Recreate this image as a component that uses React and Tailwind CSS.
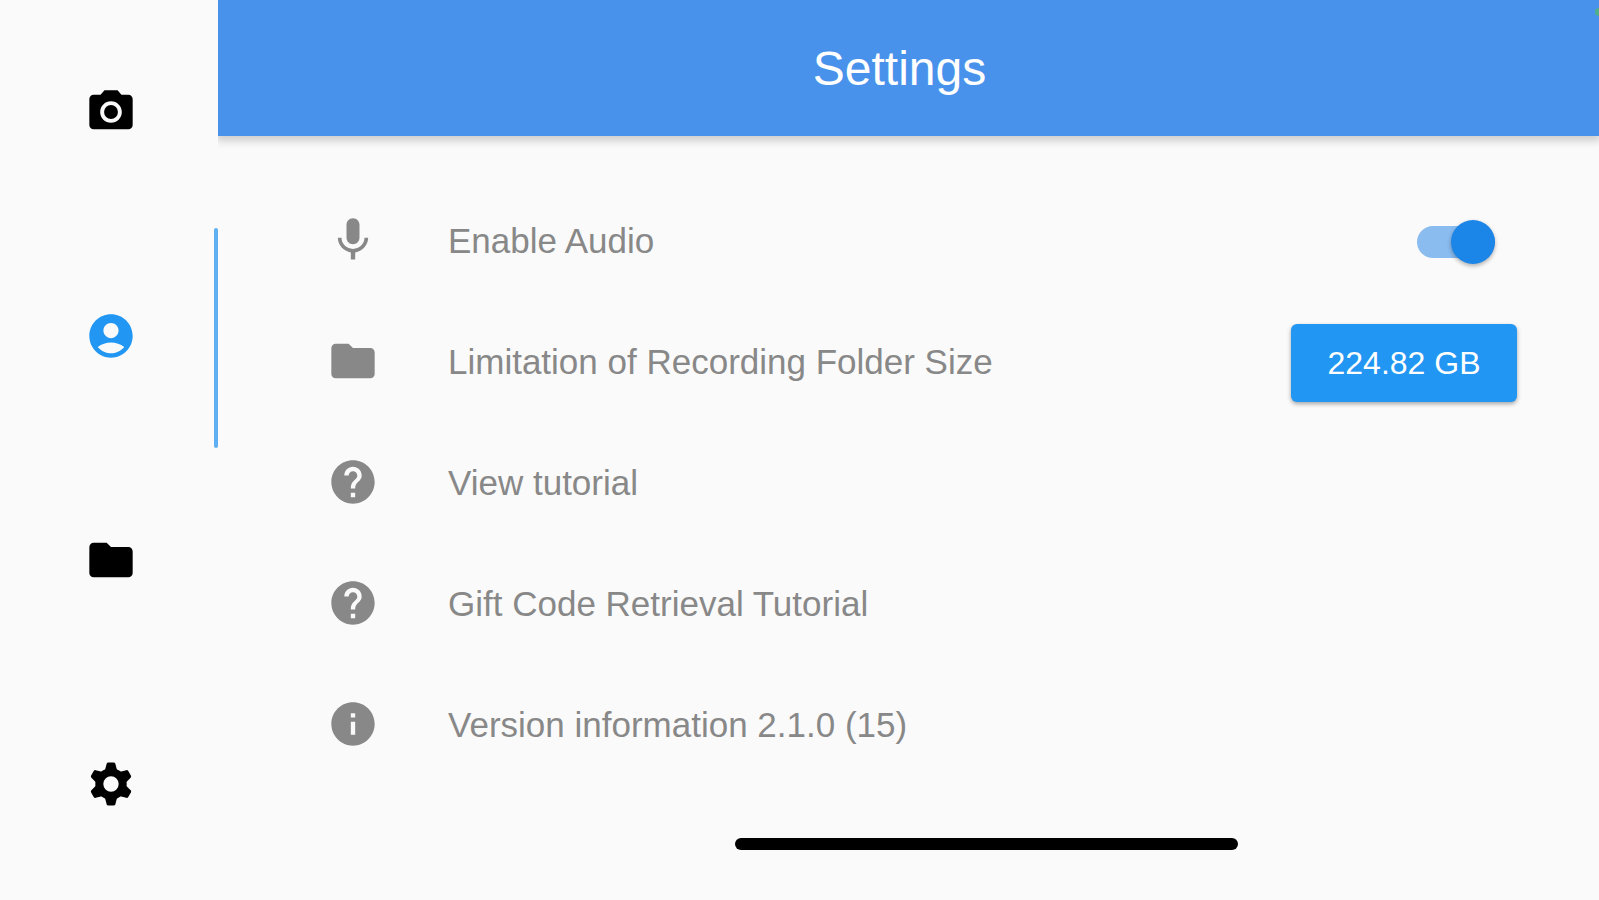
import { useState } from 'react'
import {
  MdAccountCircle,
  MdCameraAlt,
  MdFolder,
  MdHelp,
  MdInfo
} from 'react-icons/md'

function MicIcon({ size, className }) {
  return (
    <svg width={size} height={size} viewBox="0 0 24 24" fill="currentColor" className={className}>
      <path d="M12 14c1.66 0 2.99-1.34 2.99-3L15 5c0-1.66-1.34-3-3-3S9 3.34 9 5v6c0 1.66 1.34 3 3 3zm5.3-3c0 3-2.54 5.1-5.3 5.1S6.7 14 6.7 11H5c0 3.41 2.72 6.23 6 6.72V21h2v-3.28c3.28-.48 6-3.3 6-6.72h-1.7z" />
    </svg>
  )
}

function GearIcon({ size }) {
  return (
    <svg width={size} height={size} viewBox="-12 -12 24 24" fill="currentColor">
      <circle r="5.4" fill="none" stroke="currentColor" strokeWidth="3.7" />
      {[0, 60, 120, 180, 240, 300].map((angle) => (
        <path
          key={angle}
          transform={`rotate(${angle})`}
          d="M-2.9-6l.9-3.3q.2-.6.8-.6h2.4q.6 0 .8.6L2.9-6z"
        />
      ))}
    </svg>
  )
}

const tabs = [
  { id: 'camera', label: 'Camera', icon: MdCameraAlt },
  { id: 'account', label: 'Account', icon: MdAccountCircle },
  { id: 'files', label: 'Files', icon: MdFolder },
  { id: 'settings', label: 'Settings', icon: GearIcon }
]

function NavRail({ active, onChange }) {
  return (
    <nav className="flex w-[218px] shrink-0 flex-col">
      {tabs.map((tab) => (
        <button
          key={tab.id}
          type="button"
          aria-label={tab.label}
          onClick={() => onChange(tab.id)}
          className={`relative flex h-56 items-center justify-center pl-1 ${
            active === tab.id ? 'text-[#2196f3]' : 'text-black'
          }`}
        >
          <tab.icon size={52} />
          {active === tab.id && (
            <span className="absolute top-1 right-0 bottom-0 w-1 rounded-full bg-[#5fb0f3]" />
          )}
        </button>
      ))}
    </nav>
  )
}

function Row({ icon: Icon, children }) {
  return (
    <li className="flex h-[121px] items-center gap-[69px]">
      <Icon size={52} className="shrink-0" />
      <div className="flex flex-1 items-center justify-between pt-1">{children}</div>
    </li>
  )
}

function AudioSwitch({ checked, onChange }) {
  return (
    <span className="relative mr-[22px] flex h-11 w-[78px] items-center">
      <input
        id="enable-audio"
        type="checkbox"
        role="switch"
        checked={checked}
        onChange={(e) => onChange(e.target.checked)}
        className={`h-8 w-full cursor-pointer appearance-none rounded-full ${
          checked ? 'bg-[#8abcf0]' : 'bg-gray-300'
        }`}
      />
      <span
        className={`pointer-events-none absolute top-0 h-11 w-11 rounded-full shadow-[0_2px_4px_rgba(0,0,0,0.3)] ${
          checked ? 'right-0 bg-[#1c86e8]' : 'left-0 bg-white'
        }`}
      />
    </span>
  )
}

function App() {
  const [active, setActive] = useState('account')
  const [audio, setAudio] = useState(true)

  return (
    <div className="flex min-h-screen bg-[#fafafa] font-['Liberation_Sans',Arial,sans-serif]">
      <NavRail active={active} onChange={setActive} />

      <div className="flex min-w-0 flex-1 flex-col">
        <header className="relative flex h-[136px] items-center justify-center bg-[#4892eb] pt-0.5 pr-[18px] shadow-[0_3px_8px_2px_rgba(0,0,0,0.18)] [clip-path:inset(0_0_-20px_0)]">
          <h1 className="text-[48px] text-white">Settings</h1>
          {/* recording indicator */}
          <span className="absolute top-2 right-0 h-2 w-1 rounded-l-full bg-[#4fae8c]" />
        </header>

        <main className="pt-[43px] pr-[82px] pl-[109px] text-[35px] text-[#888888]">
          <ul>
            <Row icon={MicIcon}>
              <label htmlFor="enable-audio">Enable Audio</label>
              <AudioSwitch checked={audio} onChange={setAudio} />
            </Row>
            <Row icon={MdFolder}>
              <span id="folder-limit">Limitation of Recording Folder Size</span>
              <button
                type="button"
                aria-describedby="folder-limit"
                className="h-[78px] w-[226px] rounded-md bg-[#2196f3] text-[32px] text-white shadow-[0_2px_4px_rgba(0,0,0,0.35)]"
              >
                224.82 GB
              </button>
            </Row>
            <Row icon={MdHelp}>
              <button type="button">View tutorial</button>
            </Row>
            <Row icon={MdHelp}>
              <button type="button">Gift Code Retrieval Tutorial</button>
            </Row>
            <Row icon={MdInfo}>
              <span>Version information 2.1.0 (15)</span>
            </Row>
          </ul>
        </main>

        {/* home indicator */}
        <div className="mt-auto flex justify-center pb-[50px] pl-[156px]">
          <div className="h-3 w-[41%] rounded-full bg-black" />
        </div>
      </div>
    </div>
  )
}

export default App
